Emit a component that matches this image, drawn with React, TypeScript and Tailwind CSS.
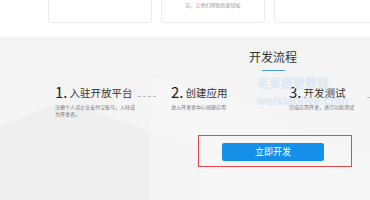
import React from 'react';

// 开发流程 — 入驻 / 创建 / 测试 三步 + 立即开发按钮
const STEPS = [
  { no: '1.', title: '入驻开放平台', desc: '注册个人或企业支付宝账号，入驻成为开发者。', w: 'w-[116px]', dash: true },
  { no: '2.', title: '创建应用', desc: '进入开发者中心创建应用', w: 'w-[118px]', dash: false },
  { no: '3.', title: '开发测试', desc: '完成应用开发，进行功能测试', w: 'w-[78px]', dash: false },
];

const font = { fontFamily: '"Noto Sans CJK SC", "Noto Sans", sans-serif' };

export default function App() {
  return (
    <div className="w-[370px] h-[200px] overflow-hidden bg-white" style={font}>
      {/* top: 产品卡片的下沿 */}
      <div className="h-[37px] bg-white">
        <div className="ml-[48px] flex gap-[9px]">
          <div className="h-[23px] w-[104px] shrink-0 rounded-b border-x border-b border-[#ececec]" />
          <div className="h-[23px] w-[104px] shrink-0 rounded-b border-x border-b border-[#ececec] flex justify-center">
            <span className="mt-[1px] text-[5px] leading-[8px] text-[#999]">店，让他们帮助您更轻松</span>
          </div>
          <div className="h-[23px] w-[104px] shrink-0 rounded-b border-x border-b border-[#ececec]" />
        </div>
      </div>

      <div className="relative h-[163px] bg-gradient-to-b from-[#f3f3f3] to-[#f6f6f6]">
        <svg className="absolute inset-0" width="370" height="163" viewBox="0 0 370 163">
          <path d="M0 90 C25 80 45 68 60 68 C90 70 140 92 200 110 L200 163 L0 163 Z" fill="#ededed" opacity="0.8" />
          <path d="M150 40 C200 50 240 60 260 75 C300 100 330 110 370 116 L370 163 L150 163 Z" fill="#f7f7f7" opacity="0.7" />
        </svg>

        <div className="relative">
          <div className="flex flex-col items-center ml-[176px] w-[194px] pt-[10px]">
            <h2 className="text-[12px] leading-[20px] text-[#333]">开发流程</h2>
            <div className="mt-[3px] h-px w-[23px] bg-[#4b9be2]" />
          </div>

          <div className="mt-[13px] ml-[55px] flex">
            {STEPS.map((s) => (
              <div key={s.no} className={`${s.w} shrink-0`}>
                <div className="flex items-end">
                  <span className="text-[15px] leading-[16px] text-[#222]">{s.no}</span>
                  <span className="ml-[2px] text-[10.5px] leading-[14px] text-[#333] whitespace-nowrap">{s.title}</span>
                  {s.dash && <span className="ml-[5px] mb-[3px] w-[18px] border-b border-dashed border-[#bbb]" />}
                </div>
                <p className="mt-[4px] w-[84px] text-[5px] leading-[6.5px] text-[#777]">{s.desc}</p>
              </div>
            ))}
            <span className="mt-[13px] w-[6px] h-0 border-b border-dashed border-[#bbb]" />
          </div>

          <div className="mt-[18px] ml-[198px] w-[154px] h-[32px] border border-[#e8474a] pl-[23px] pt-[7px]">
            <button className="block w-[102px] h-[18px] rounded-[2px] bg-[#1590e9] text-[9px] leading-[18px] text-white">
              立即开发
            </button>
          </div>
        </div>

        {/* watermark */}
        <div className="absolute left-[257px] top-[40px] font-bold text-[#dbe7f4] leading-none pointer-events-none">
          <div className="text-[12px]">老吴搭建教程</div>
          <div className="mt-[6px] text-[12px]" style={{ fontFamily: '"Liberation Sans", sans-serif' }}>weixiaolive.com</div>
        </div>
      </div>
    </div>
  );
}
